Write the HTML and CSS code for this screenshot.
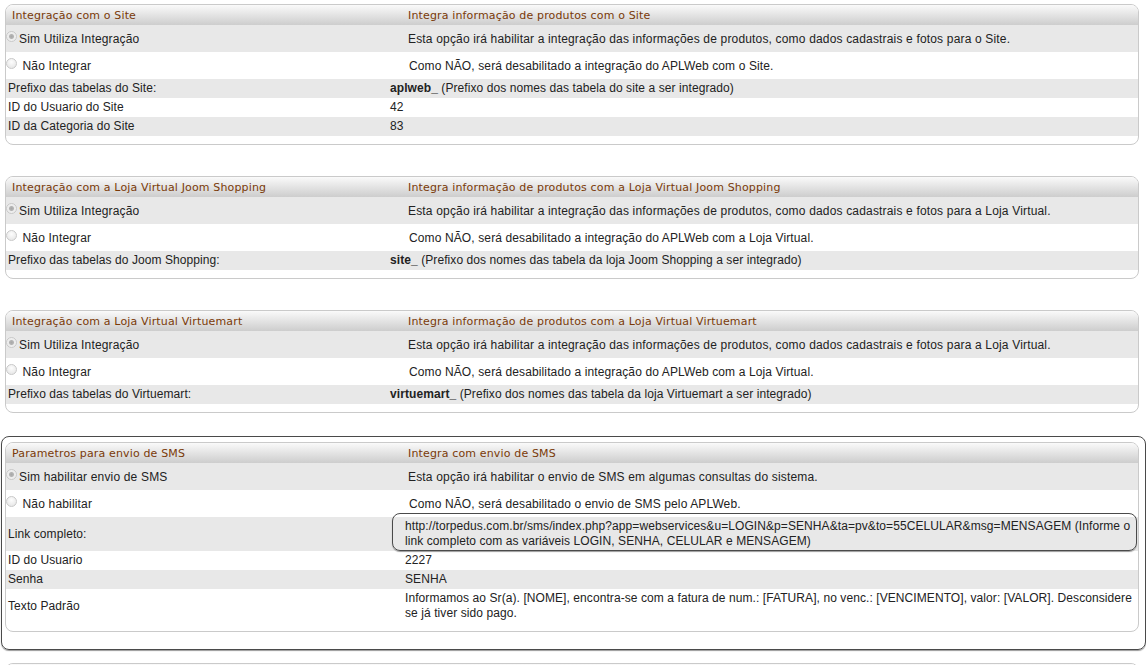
FILE: index.html
```html
<!DOCTYPE html>
<html lang="pt-BR">
<head>
    <meta charset="UTF-8">
    <title>Integrações</title>
    <link rel="stylesheet" href="styles.css">
</head>
<body>
    <div class="panel">
        <div class="hd"><div class="c1">Integração com o Site</div><div>Integra informação de produtos com o Site</div></div>
        <div class="opt alt"><div class="c1"><span class="radio on"></span>Sim Utiliza Integração</div><div>Esta opção irá habilitar a integração das informações de produtos, como dados cadastrais e fotos para o Site.</div></div>
        <div class="opt"><div class="c1"><span class="radio"></span> Não Integrar</div><div class="no">Como NÃO, será desabilitado a integração do APLWeb com o Site.</div></div>
        <div class="row alt"><div class="c1">Prefixo das tabelas do Site:</div><div><b>aplweb_</b> (Prefixo dos nomes das tabela do site a ser integrado)</div></div>
        <div class="row"><div class="c1">ID do Usuario do Site</div><div>42</div></div>
        <div class="row alt"><div class="c1">ID da Categoria do Site</div><div>83</div></div>
    </div>

    <div class="panel">
        <div class="hd"><div class="c1">Integração com a Loja Virtual Joom Shopping</div><div>Integra informação de produtos com a Loja Virtual Joom Shopping</div></div>
        <div class="opt alt"><div class="c1"><span class="radio on"></span>Sim Utiliza Integração</div><div>Esta opção irá habilitar a integração das informações de produtos, como dados cadastrais e fotos para a Loja Virtual.</div></div>
        <div class="opt"><div class="c1"><span class="radio"></span> Não Integrar</div><div class="no">Como NÃO, será desabilitado a integração do APLWeb com a Loja Virtual.</div></div>
        <div class="row alt"><div class="c1">Prefixo das tabelas do Joom Shopping:</div><div><b>site_</b> (Prefixo dos nomes das tabela da loja Joom Shopping a ser integrado)</div></div>
    </div>

    <div class="panel">
        <div class="hd"><div class="c1">Integração com a Loja Virtual Virtuemart</div><div>Integra informação de produtos com a Loja Virtual Virtuemart</div></div>
        <div class="opt alt"><div class="c1"><span class="radio on"></span>Sim Utiliza Integração</div><div>Esta opção irá habilitar a integração das informações de produtos, como dados cadastrais e fotos para a Loja Virtual.</div></div>
        <div class="opt"><div class="c1"><span class="radio"></span> Não Integrar</div><div class="no">Como NÃO, será desabilitado a integração do APLWeb com a Loja Virtual.</div></div>
        <div class="row alt"><div class="c1">Prefixo das tabelas do Virtuemart:</div><div><b>virtuemart_</b> (Prefixo dos nomes das tabela da loja Virtuemart a ser integrado)</div></div>
    </div>

    <div class="focus">
        <div class="panel sms">
            <div class="hd"><div class="c1">Parametros para envio de SMS</div><div>Integra com envio de SMS</div></div>
            <div class="opt alt"><div class="c1"><span class="radio on"></span>Sim habilitar envio de SMS</div><div>Esta opção irá habilitar o envio de SMS em algumas consultas do sistema.</div></div>
            <div class="opt"><div class="c1"><span class="radio"></span> Não habilitar</div><div class="no">Como NÃO, será desabilitado o envio de SMS pelo APLWeb.</div></div>
            <div class="row alt"><div class="c1">Link completo:</div><div class="c2"><div class="linkbox">http://torpedus.com.br/sms/index.php?app=webservices&amp;u=LOGIN&amp;p=SENHA&amp;ta=pv&amp;to=55CELULAR&amp;msg=MENSAGEM (Informe o link completo com as variáveis LOGIN, SENHA, CELULAR e MENSAGEM)</div></div></div>
            <div class="row"><div class="c1">ID do Usuario</div><div>2227</div></div>
            <div class="row alt"><div class="c1">Senha</div><div>SENHA</div></div>
            <div class="row"><div class="c1">Texto Padrão</div><div class="c2">Informamos ao Sr(a). [NOME], encontra-se com a fatura de num.: [FATURA], no venc.: [VENCIMENTO], valor: [VALOR]. Desconsidere se já tiver sido pago.</div></div>
        </div>
    </div>

    <div class="panel">
        <div class="hd"><div class="c1">&nbsp;</div><div>&nbsp;</div></div>
        <div class="row"><div class="c1">&nbsp;</div><div>&nbsp;</div></div>
    </div>
</body>
</html>
```

FILE: styles.css
```css
body {
    margin: 0;
    padding-top: 4px;
    background: #fff;
    font-family: "Liberation Sans", Arial, sans-serif;
    font-size: 12px;
    color: #222;
}

.panel {
    width: 1132px;
    margin: 0 0 31px 5px;
    padding-bottom: 8px;
    border: 1px solid #cacaca;
    border-radius: 8px;
    overflow: hidden;
    background: #fff;
}

.hd {
    display: flex;
    height: 20px;
    line-height: 21px;
    padding-left: 6px;
    background: linear-gradient(#fafafa, #cdcdcd);
    font-family: "DejaVu Sans", Verdana, sans-serif;
    font-size: 11px;
    letter-spacing: 0.15px;
    color: #7a3a08;
}

.hd .c1 {
    width: 396px;
    flex: none;
}

.opt {
    display: flex;
    align-items: center;
    height: 27px;
    padding-left: 1px;
    letter-spacing: 0.17px;
}

.opt .c1 {
    width: 401px;
    flex: none;
}

.opt .no {
    padding-left: 1px;
    letter-spacing: 0.12px;
}

.row {
    display: flex;
    align-items: center;
    padding: 2px 0 2px 2px;
    line-height: 15px;
    letter-spacing: 0.08px;
}

.row .c1 {
    width: 382px;
    flex: none;
}

.sms .row .c1 {
    width: 397px;
}

.c2 {
    flex: 1;
}

.alt {
    background: #e8e8e8;
}

.radio {
    display: inline-block;
    width: 9px;
    height: 9px;
    margin: 0 2px 0 -1px;
    border: 1px solid #c8c8c8;
    border-radius: 50%;
    background: radial-gradient(circle at 50% 35%, #fdfdfd, #e2e2e2);
    vertical-align: 1px;
}

.radio.on {
    background: radial-gradient(circle, #a8a8a8 0, #b4b4b4 2px, #ececec 3px, #f4f4f4);
}

.focus {
    margin: -8px 0 13px 1px;
    padding: 5px 6px 17px 3px;
    border: 1px solid #4a4a4a;
    border-radius: 8px;
    box-shadow: 0 1px 1px #999;
}

.focus .panel {
    margin: 0;
}

.linkbox {
    margin: -6px 1px -2px -13px;
    padding: 5px 1px 1px 12px;
    border: 1px solid #4a4a4a;
    border-radius: 8px;
    box-shadow: 0 1px 1px #999;
    letter-spacing: 0.08px;
}
```
